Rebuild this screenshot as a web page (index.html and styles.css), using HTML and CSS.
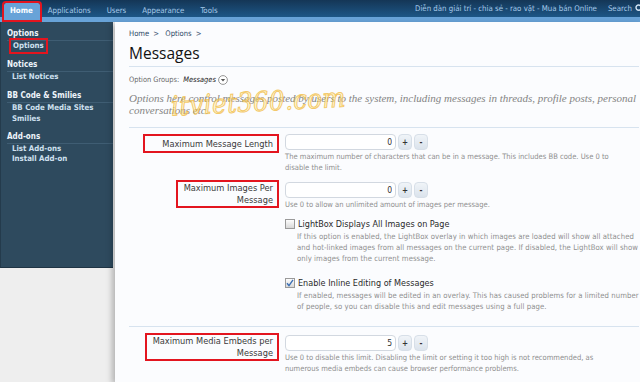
FILE: index.html
```html
<!DOCTYPE html>
<html lang="en">
<head>
    <meta charset="UTF-8">
    <title>Messages - Options</title>
    <link rel="stylesheet" href="styles.css">
</head>
<body>
    <header class="topbar">
        <nav class="tabs">
            <a class="tab active">Home</a>
            <a class="tab">Applications</a>
            <a class="tab">Users</a>
            <a class="tab">Appearance</a>
            <a class="tab">Tools</a>
        </nav>
        <div class="top-right">
            <span class="board-title">Diễn đàn giải trí - chia sẻ - rao vặt - Mua bán Online</span>
            <span class="search">Search
                <svg width="9" height="9" viewBox="0 0 9 9"><circle cx="3.6" cy="3.6" r="2.6" fill="none" stroke="#cfe2f3" stroke-width="1.4"/><path d="M5.5 5.5 L8.5 8.5" stroke="#cfe2f3" stroke-width="1.6"/></svg>
            </span>
        </div>
    </header>

    <div class="layout">
        <aside class="sidebar">
            <div class="side-group">
                <h3>Options</h3>
                <ul>
                    <li><a class="marked">Options</a></li>
                </ul>
            </div>
            <div class="side-group">
                <h3>Notices</h3>
                <ul>
                    <li><a>List Notices</a></li>
                </ul>
            </div>
            <div class="side-group">
                <h3>BB Code &amp; Smilies</h3>
                <ul>
                    <li><a>BB Code Media Sites</a></li>
                    <li><a>Smilies</a></li>
                </ul>
            </div>
            <div class="side-group">
                <h3>Add-ons</h3>
                <ul>
                    <li><a>List Add-ons</a></li>
                    <li><a>Install Add-on</a></li>
                </ul>
            </div>
        </aside>

        <main class="content">
            <div class="watermark">itviet360.com</div>
            <div class="breadcrumb"><a>Home</a> &gt; <a>Options</a> &gt;</div>
            <h1>Messages</h1>
            <div class="groups">Option Groups: <em>Messages</em>
                <svg width="10" height="10" viewBox="0 0 10 10"><circle cx="5" cy="5" r="4.4" fill="#fff" stroke="#8a8a8a" stroke-width="0.9"/><path d="M2.8 4 L7.2 4 L5 6.6 Z" fill="#555"/></svg>
            </div>
            <p class="description">Options here control messages posted by users to the system, including messages in threads, profile posts, personal<br>conversations etc.</p>

            <section class="option-block first">
                <div class="row">
                    <div class="label"><span class="marked wide">Maximum Message Length</span></div>
                    <div class="field">
                        <div class="spinner">
                            <input type="text" value="0">
                            <button>+</button>
                            <button>-</button>
                        </div>
                        <p class="hint">The maximum number of characters that can be in a message. This includes BB code. Use 0 to<br>disable the limit.</p>
                    </div>
                </div>

                <div class="row second">
                    <div class="label"><span class="marked">Maximum Images Per<br>Message</span></div>
                    <div class="field">
                        <div class="spinner">
                            <input type="text" value="0">
                            <button>+</button>
                            <button>-</button>
                        </div>
                        <p class="hint">Use 0 to allow an unlimited amount of images per message.</p>
                    </div>
                </div>

                <div class="row check-row">
                    <div class="label"></div>
                    <div class="field">
                        <div class="check"><span class="box"></span>LightBox Displays All Images on Page</div>
                        <p class="hint indent">If this option is enabled, the LightBox overlay in which images are loaded will show all attached<br>and hot-linked images from all messages on the current page. If disabled, the LightBox will show<br>only images from the current message.</p>
                    </div>
                </div>

                <div class="row check-row last">
                    <div class="label"></div>
                    <div class="field">
                        <div class="check"><span class="box checked"><svg width="8" height="8" viewBox="0 0 8 8"><path d="M1 4.2 L3 6.6 L7 0.8" fill="none" stroke="#3b6fb4" stroke-width="1.4"/></svg></span>Enable Inline Editing of Messages</div>
                        <p class="hint indent">If enabled, messages will be edited in an overlay. This has caused problems for a limited number<br>of people, so you can disable this and edit messages using a full page.</p>
                    </div>
                </div>
            </section>

            <section class="option-block">
                <div class="row">
                    <div class="label"><span class="marked">Maximum Media Embeds per<br>Message</span></div>
                    <div class="field">
                        <div class="spinner">
                            <input type="text" value="5">
                            <button>+</button>
                            <button>-</button>
                        </div>
                        <p class="hint">Use 0 to disable this limit. Disabling the limit or setting it too high is not recommended, as<br>numerous media embeds can cause browser performance problems.</p>
                    </div>
                </div>
            </section>
        </main>
    </div>
</body>
</html>
```

FILE: styles.css
```css
* {
    margin: 0;
    padding: 0;
    box-sizing: border-box;
}

body {
    background-color: #eeeeee;
    font-family: "DejaVu Sans Condensed", "DejaVu Sans", sans-serif;
    font-stretch: condensed;
    color: #222;
    width: 640px;
    height: 382px;
    overflow: hidden;
}

a {
    text-decoration: none;
}

/* top bar */
.topbar {
    height: 22px;
    background: linear-gradient(#143656, #1d5686);
    border-bottom: 5px solid #68a3d8;
    display: flex;
    justify-content: space-between;
}

.tabs {
    display: flex;
    align-items: flex-start;
    padding-left: 4px;
}

.tab {
    color: #a8cbea;
    font-size: 7.8px;
    height: 17px;
    line-height: 15px;
    margin-top: 3px;
    padding: 0 8px 0 7px;
}

.tabs .tab + .tab {
    margin-left: 1px;
}

.tab.active {
    background-color: #68a3d8;
    color: #fff;
    font-weight: bold;
    padding: 0 7px 0 6px;
    border-radius: 2px 2px 0 0;
    outline: 2px solid #e3151f;
}

.top-right {
    display: flex;
    align-items: center;
    height: 17px;
    color: #a8cbea;
    font-size: 7.8px;
    gap: 11px;
    white-space: nowrap;
}

.search {
    display: flex;
    align-items: center;
    gap: 3px;
    margin-right: -4px;
}

/* layout */
.layout {
    display: flex;
    align-items: flex-start;
}

.sidebar {
    width: 113px;
    height: 246px;
    flex-shrink: 0;
    background-color: #2e4a5e;
    border-left: 1px solid #243b4c;
    border-bottom: 1px solid #1f3444;
    padding: 6px 0 0 6px;
}

.side-group {
    margin-bottom: 7.5px;
}

.side-group:nth-child(3) {
    margin-bottom: 6.5px;
}

.side-group h3 {
    color: #eef5fb;
    font-size: 8px;
    line-height: 12px;
    font-weight: bold;
}

.side-group ul {
    list-style: none;
    border-top: 1px solid #3f5d73;
}

.side-group li {
    line-height: 10.5px;
    font-size: 7.8px;
    padding-left: 5px;
}

.side-group li a {
    color: #cfe0ef;
    font-weight: bold;
}

.side-group li a.marked {
    display: inline-block;
    outline: 2px solid #e3151f;
    outline-offset: 1px;
    padding: 0 1px;
    line-height: 10px;
}

.content {
    position: relative;
    flex: 1;
    margin-left: 2px;
    height: 360px;
    background-color: #fbfcfe;
    box-shadow: -3px 2px 6px rgba(0, 0, 0, 0.25);
    padding: 6px 4px 0 14px;
}

.watermark {
    position: absolute;
    left: 56px;
    top: 64px;
    font-family: "DejaVu Serif", serif;
    font-style: italic;
    font-size: 27px;
    letter-spacing: 0.5px;
    color: rgba(255, 240, 160, 0.45);
    -webkit-text-stroke: 1px rgba(240, 180, 50, 0.7);
    transform: rotate(-3deg);
    pointer-events: none;
}

.breadcrumb {
    font-size: 7.6px;
    line-height: 12px;
    color: #49607a;
}

.breadcrumb a {
    color: #2b4866;
    margin-right: 2px;
}

.breadcrumb a + a {
    margin-left: 4px;
}

h1 {
    font-family: "Open Sans", sans-serif;
    font-stretch: normal;
    font-weight: normal;
    font-size: 15.5px;
    line-height: 18px;
    color: #111;
    margin-top: 4px;
    padding-bottom: 4px;
    border-bottom: 1px solid #d7e3ef;
}

.groups {
    margin-top: 7px;
    font-size: 7.4px;
    line-height: 12px;
    color: #666;
    display: flex;
    align-items: center;
    gap: 2px;
}

.groups em {
    color: #222;
    margin-left: 2px;
}

.description {
    margin-top: 6px;
    padding-bottom: 11px;
    font-family: "Liberation Serif", serif;
    font-style: italic;
    font-size: 11px;
    line-height: 12px;
    color: #848484;
    white-space: nowrap;
    border-bottom: 1px solid #d7e3ef;
}

.option-block {
    padding: 6px 0 14px;
    border-bottom: 1px solid #d7e3ef;
}

.option-block.first {
    padding-top: 4px;
}

.option-block:last-child {
    border-bottom: none;
}

.row {
    display: grid;
    grid-template-columns: 156px 1fr;
}

.row.second {
    margin-top: 7px;
}

.check-row {
    margin-top: 8px;
}

.check-row.last {
    margin-top: 13px;
}

.label {
    text-align: right;
    padding-right: 6px;
}

.label .marked {
    display: inline-block;
    border: 2px solid #e3151f;
    padding: 0 4px 0 6px;
    font-size: 9.2px;
    line-height: 12px;
    color: #3a3a3a;
    white-space: nowrap;
}

.label .marked.wide {
    padding: 2px 4px 1px 17px;
}

.spinner {
    display: flex;
    align-items: center;
    gap: 2px;
    margin-top: 2px;
}

.spinner input {
    width: 111px;
    height: 16px;
    border: 1px solid #d2d8e0;
    border-radius: 4px;
    background: #fff;
    text-align: right;
    padding-right: 3px;
    font-family: inherit;
    font-size: 8.5px;
    color: #333;
}

.spinner button {
    width: 14px;
    height: 16px;
    border: 1px solid #d7dfe8;
    border-radius: 4px;
    background: linear-gradient(#f0f4f8, #dbe3ec);
    font-family: inherit;
    font-size: 8px;
    font-weight: bold;
    color: #333;
}

.hint {
    margin-top: 1px;
    font-size: 7.55px;
    line-height: 11px;
    color: #8f8f8f;
    white-space: nowrap;
}

.hint.indent {
    margin-top: 1px;
    padding-left: 12px;
    font-size: 7.7px;
    letter-spacing: 0.06px;
}

.check {
    display: flex;
    align-items: center;
    font-size: 9px;
    line-height: 12px;
    color: #2a2a2a;
}

.box {
    width: 10px;
    height: 10px;
    margin-right: 3px;
    border: 1px solid #9a9a9a;
    background: linear-gradient(#fdfdfd, #d8d8d8);
    display: flex;
    align-items: center;
    justify-content: center;
}
```
